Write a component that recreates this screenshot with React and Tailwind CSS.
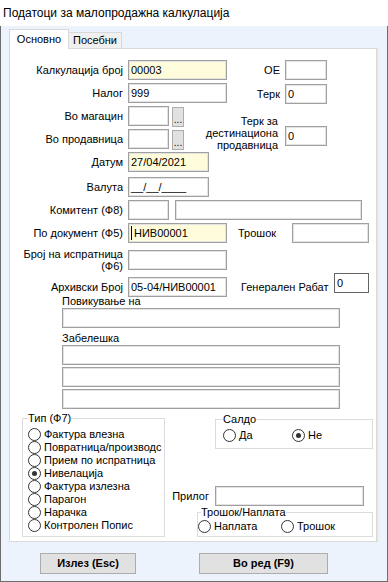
import clsx from 'clsx';

function Field({ className, yellow, single, children }) {
  return (
    <div
      className={clsx(
        'h-[20px] shrink-0 flex items-center pl-[2px] overflow-hidden whitespace-nowrap text-[11px] leading-[13px]',
        single ? 'border border-[#646464]' : 'border border-[#a0a0a0] shadow-[inset_0_0_0_1px_#e3e3e3]',
        yellow ? 'bg-[#fffcdc]' : 'bg-white',
        className,
      )}
    >
      {children}
    </div>
  );
}

function Label({ children, className }) {
  return <div className={clsx('shrink-0 text-right text-[11px] leading-[12px]', className)}>{children}</div>;
}

function Dots() {
  return (
    <div className="ml-[3px] mt-[2px] h-[20px] w-[12px] shrink-0 border border-[#adadad] bg-[#e1e1e1] flex items-end justify-center pb-[1px] text-[10px] leading-[10px]">
      ...
    </div>
  );
}

function Radio({ checked, label, className }) {
  return (
    <div className={clsx('flex h-[13px] items-center gap-[3px] whitespace-nowrap text-[11px] leading-[13px]', className)}>
      <span className="flex h-[13px] w-[13px] shrink-0 items-center justify-center rounded-full border border-[#333] bg-white">
        {checked && <span className="h-[5px] w-[5px] rounded-full bg-[#333]" />}
      </span>
      <span>{label}</span>
    </div>
  );
}

// second entry is cut at the group border in the original form
const TYPES = [
  'Фактура влезна',
  'Повратница/производс',
  'Прием по испратница',
  'Нивелација',
  'Фактура излезна',
  'Парагон',
  'Нарачка',
  'Контролен Попис',
];

export default function App() {
  return (
    <div className="flex h-[582px] w-[388px] flex-col font-['Liberation_Sans',Arial,sans-serif] text-black">
      {/* Title bar */}
      <div className="flex h-[26px] shrink-0 items-center bg-white pl-[3px] text-[12px]">
        Податоци за малопродажна калкулација
      </div>

      <div className="flex-1 border-x border-b border-[#6d6d6d] bg-[#edf3fd] pl-[8px] pt-[3px]">
        {/* Tabs */}
        <div className="flex h-[19px] items-start">
          <div className="relative z-10 flex h-[20px] w-[60px] items-center justify-center border-x border-t border-[#d9d9d9] bg-white text-[11px]">
            Основно
          </div>
          <div className="mt-[3px] flex h-[16px] w-[53px] items-center justify-center border-r border-t border-[#d9d9d9] bg-[#f0f0f0] text-[11px]">
            Посебни
          </div>
        </div>

        {/* Panel */}
        <div className="h-[494px] w-[368px] border border-[#d9d9d9] bg-white pt-[11px] shadow-[1px_0_0_#e6e6e6,2px_0_0_#eeeeee]">
          {/* Top section */}
          <div className="flex">
            <div className="w-[217px] shrink-0">
              <div className="flex h-[20px] items-center">
                <Label className="w-[113px]">Калкулација број</Label>
                <Field yellow className="ml-[5px] w-[99px]">00003</Field>
              </div>
              <div className="mt-[3px] flex h-[20px] items-center">
                <Label className="w-[113px]">Налог</Label>
                <Field className="ml-[5px] w-[99px]">999</Field>
              </div>
              <div className="mt-[3px] flex h-[20px] items-center">
                <Label className="w-[113px]">Во магацин</Label>
                <Field className="ml-[5px] w-[41px]" />
                <Dots />
              </div>
              <div className="mt-[3px] flex h-[20px] items-center">
                <Label className="w-[113px]">Во продавница</Label>
                <Field className="ml-[5px] w-[41px]" />
                <Dots />
              </div>
              <div className="mt-[3px] flex h-[20px] items-center">
                <Label className="w-[113px]">Датум</Label>
                <Field yellow className="ml-[5px] w-[81px]">27/04/2021</Field>
              </div>
            </div>

            <div className="flex-1">
              <div className="flex h-[20px] items-center">
                <Label className="w-[53px]">ОЕ</Label>
                <Field className="ml-[5px] w-[42px]" />
              </div>
              <div className="mt-[4px] flex h-[20px] items-center">
                <Label className="w-[53px]">Терк</Label>
                <Field className="ml-[5px] w-[42px]">0</Field>
              </div>
              <div className="mt-[22px] flex h-[20px] items-start">
                <div className="-mt-[11px] flex w-[53px] shrink-0 flex-col items-end whitespace-nowrap pr-[2px] text-[11px] leading-[12px]">
                  <span>Терк за</span>
                  <span>дестинациона</span>
                  <span>продавница</span>
                </div>
                <Field className="ml-[5px] w-[42px]">0</Field>
              </div>
            </div>
          </div>

          {/* Middle rows */}
          <div className="mt-[5px] flex h-[20px] items-center">
            <Label className="w-[113px]">Валута</Label>
            <Field className="ml-[5px] w-[81px]">__/__/____</Field>
          </div>
          <div className="mt-[3px] flex h-[20px] items-center">
            <Label className="w-[113px]">Комитент (Ф8)</Label>
            <Field className="ml-[5px] w-[41px]" />
            <Field className="ml-[6px] w-[187px]" />
          </div>
          <div className="mt-[3px] flex h-[20px] items-center">
            <Label className="w-[113px]">По документ (Ф5)</Label>
            <Field yellow className="ml-[5px] w-[99px] pl-[1px]">
              <span className="h-[14px] w-[1px] bg-black" />
              <span className="ml-[2px]">НИВ00001</span>
            </Field>
            <div className="ml-[11px] w-[54px] shrink-0 text-[11px]">Трошок</div>
            <Field className="w-[77px]" />
          </div>
          <div className="mt-[7px] flex h-[20px] items-center">
            <Label className="w-[113px]">
              Број на испратница
              <br />
              (Ф6)
            </Label>
            <Field className="ml-[5px] w-[99px]" />
          </div>
          <div className="mt-[7px] flex h-[20px] items-center">
            <Label className="w-[113px]">Архивски Број</Label>
            <Field className="ml-[5px] w-[99px]">05-04/НИВ00001</Field>
            <div className="ml-[14px] w-[86px] shrink-0 whitespace-nowrap text-[11px]">Генерален Рабат</div>
            <Field single className="mb-[8px] ml-[7px] w-[35px]">0</Field>
          </div>

          {/* Text areas */}
          <div className="-mt-[2px] ml-[52px] h-[12px] text-[11px] leading-[12px]">Повикување на</div>
          <Field className="ml-[52px] mt-[1px] w-[278px]" />
          <div className="ml-[52px] mt-[4px] h-[12px] text-[11px] leading-[12px]">Забелешка</div>
          <Field className="ml-[52px] mt-[1px] w-[278px]" />
          <Field className="ml-[52px] mt-[2px] w-[278px]" />
          <Field className="ml-[52px] mt-[2px] w-[278px]" />

          {/* Groups */}
          <div className="mt-[3px] flex items-start">
            <fieldset className="ml-[12px] h-[125px] w-[143px] min-w-0 shrink-0 overflow-hidden border border-[#dcdcdc] px-[5px]">
              <legend className="text-[11px] leading-[12px]">Тип (Ф7)</legend>
              <div className="mt-[4px]">
                {TYPES.map((t) => (
                  <Radio key={t} label={t} checked={t === 'Нивелација'} />
                ))}
              </div>
            </fieldset>

            <div className="flex flex-col">
              <fieldset className="ml-[50px] mt-[1px] h-[36px] w-[158px] min-w-0 border border-[#dcdcdc] pl-[7px]">
                <legend className="text-[11px] leading-[12px]">Салдо</legend>
                <div className="mt-[4px] flex">
                  <Radio label="Да" className="w-[69px] gap-[2px]" />
                  <Radio label="Не" checked className="gap-[2px]" />
                </div>
              </fieldset>

              <div className="mt-[37px] flex h-[20px] items-center">
                <Label className="w-[44px]">Прилог</Label>
                <Field className="ml-[6px] w-[149px]" />
              </div>

              <fieldset className="ml-[32px] h-[31px] w-[176px] min-w-0 border border-[#dcdcdc]">
                <legend className="ml-[3px] text-[11px] leading-[12px]">Трошок/Наплата</legend>
                <div className="mt-[2px] flex">
                  <Radio label="Наплата" className="w-[83px] gap-[2px]" />
                  <Radio label="Трошок" className="gap-[2px]" />
                </div>
              </fieldset>
            </div>
          </div>
        </div>

        {/* Buttons */}
        <div className="mt-[11px] flex">
          <button className="ml-[31px] flex h-[21px] w-[96px] items-center justify-center border border-[#adadad] bg-[#e1e1e1] text-[11px] font-bold">
            Излез (Esc)
          </button>
          <button className="ml-[63px] flex h-[21px] w-[129px] items-center justify-center border border-[#adadad] bg-[#e1e1e1] text-[11px] font-bold">
            Во ред (F9)
          </button>
        </div>
      </div>
    </div>
  );
}
